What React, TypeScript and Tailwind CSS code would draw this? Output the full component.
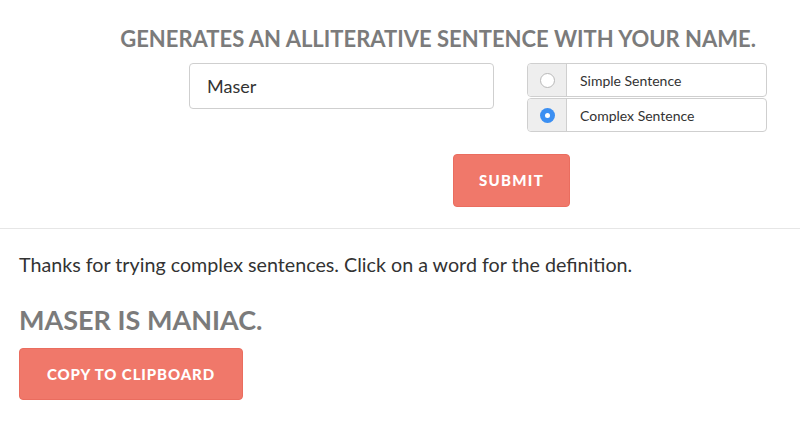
import * as React from "react"

const font = { fontFamily: "Lato, 'Open Sans', sans-serif" }

function RadioRow({ label, checked, top }: { label: string; checked?: boolean; top?: boolean }) {
  return (
    <div className={`flex h-[34px] border border-[#cfcfcf] rounded ${top ? "" : "mt-px"}`}>
      <div className="w-[39px] flex items-center justify-center bg-[#eeeeee] border-r border-[#cfcfcf] rounded-l">
        {checked ? (
          <span className="w-[15px] h-[15px] rounded-full bg-[#3b8ff2] flex items-center justify-center">
            <span className="w-[5px] h-[5px] rounded-full bg-white" />
          </span>
        ) : (
          <span className="w-[15px] h-[15px] rounded-full bg-white border border-[#b8b8b8]" />
        )}
      </div>
      <div className="flex-1 flex items-center pl-[13px] text-[14px] text-[#333]">{label}</div>
    </div>
  )
}

export default function App() {
  const [name, setName] = React.useState("Maser")

  return (
    <div className="w-[800px] h-[425px] bg-white overflow-hidden" style={font}>
      <div className="pt-[24px]">
        <h1 className="text-right pr-[44px] text-[22px] font-bold text-[#7b7b7b] whitespace-nowrap leading-[30px]">
          GENERATES AN ALLITERATIVE SENTENCE WITH YOUR NAME.
        </h1>
        <div className="flex mt-[9px] pl-[189px]">
          <input
            value={name}
            onChange={(e) => setName(e.target.value)}
            className="w-[305px] h-[46px] border border-[#cfcfcf] rounded px-[17px] text-[18px] text-[#333] outline-none"
            style={font}
          />
          <div className="ml-[33px] w-[240px]">
            <RadioRow label="Simple Sentence" top />
            <RadioRow label="Complex Sentence" checked />
          </div>
        </div>
        <div className="pl-[453px] mt-[22px]">
          <button className="w-[117px] h-[53px] rounded bg-[#f0786a] border border-[#ea6d5f] text-white font-black text-[15px] tracking-[1.3px]">
            SUBMIT
          </button>
        </div>
      </div>
      <div className="mt-[21px] border-t border-[#e6e6e6] px-[19px] pt-[24px]">
        <p className="text-[19.7px] text-[#333] leading-[24px]">
          Thanks for trying complex sentences. Click on a word for the definition.
        </p>
        <h2 className="mt-[26px] text-[27px] font-bold text-[#7b7b7b] leading-[34px]">MASER IS MANIAC.</h2>
        <button className="mt-[11px] w-[224px] h-[52px] rounded bg-[#f0786a] border border-[#ea6d5f] text-white font-black text-[15px] tracking-[0.9px]">
          COPY TO CLIPBOARD
        </button>
      </div>
    </div>
  )
}
